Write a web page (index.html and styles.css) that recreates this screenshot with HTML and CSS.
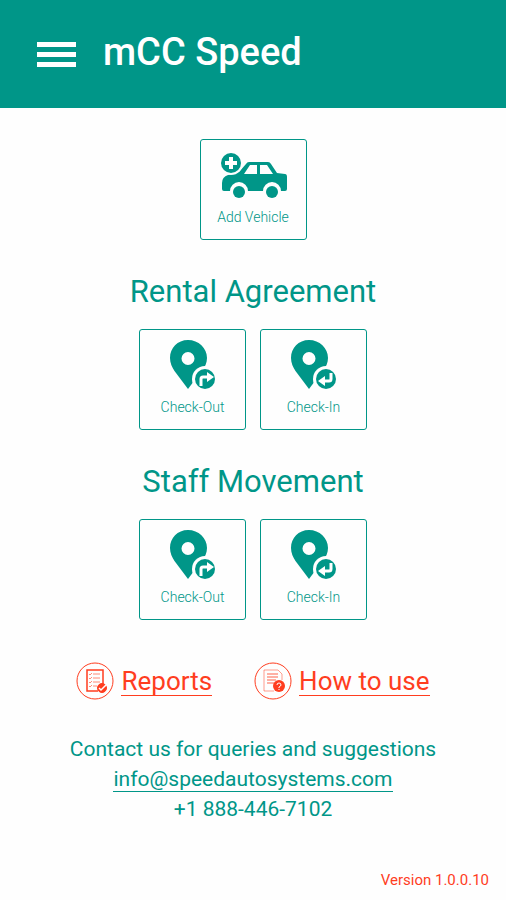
FILE: index.html
```
<!DOCTYPE html>
<html lang="en">
<head>
    <meta charset="UTF-8">
    <meta name="viewport" content="width=device-width, initial-scale=1.0">
    <title>mCC Speed</title>
    <link rel="stylesheet" href="styles.css">
</head>
<body>
    <!-- Shared icon shapes -->
    <svg class="sprite" aria-hidden="true">
        <symbol id="pin" viewBox="0 0 48 50">
            <path fill="currentColor" fill-rule="evenodd" d="M19 0C8.500 0 1 8 1 18c0 5 2 9 4.500 13L19 49l13.500-18C36 27 38 23 38 18 38 8 29.500 0 19 0zM19 12a6.500 6.500 0 1 1 0 13 6.500 6.500 0 0 1 0-13z"/>
            <circle cx="36" cy="39" r="13" fill="#fefefe"/>
            <circle cx="36" cy="39" r="10" fill="currentColor"/>
        </symbol>
    </svg>
    <header>
        <button class="menu-button" aria-label="Menu">
            <span></span>
            <span></span>
            <span></span>
        </button>
        <h1>mCC Speed</h1>
    </header>
    <main>
        <div class="tiles">
            <button class="tile">
                <svg width="68" height="50" viewBox="0 0 68 50" aria-hidden="true">
                    <path fill="currentColor" fill-rule="evenodd" d="M30 12h19q2 0 3 2l6 9 8 1q2 0 2 3v12q0 2-2 2h-4a9 9 0 0 0-18 0H29a9 9 0 0 0-18 0H5q-2 0-2-2v-6q0-6 6-8l11-3 7-8q1-2 3-2zM31 15l-6 9h13v-9zM41 15v9h13l-6-9z"/>
                    <circle cx="20" cy="42" r="6" fill="currentColor"/>
                    <circle cx="53" cy="42" r="6" fill="currentColor"/>
                    <circle cx="12" cy="13" r="12" fill="#fefefe"/>
                    <circle cx="12" cy="13" r="10" fill="currentColor"/>
                    <path fill="#fff" d="M10 7h4v4h4v4h-4v4h-4v-4H6v-4h4z"/>
                </svg>
                Add Vehicle
            </button>
        </div>

        <h2>Rental Agreement</h2>
        <div class="tiles">
            <button class="tile">
                <svg width="48" height="50" viewBox="0 0 48 50" aria-hidden="true">
                    <use href="#pin"/>
                    <path class="arrow" d="M32 46v-7q0-2 2-2h5"/>
                    <path fill="#fff" d="M38 32l7 5-7 5z"/>
                </svg>
                Check-Out
            </button>
            <button class="tile">
                <svg width="48" height="50" viewBox="0 0 48 50" aria-hidden="true">
                    <use href="#pin"/>
                    <path class="arrow" d="M41 33v6q0 2-2 2h-5"/>
                    <path fill="#fff" d="M35 36l-7 5 7 5z"/>
                </svg>
                Check-In
            </button>
        </div>

        <h2>Staff Movement</h2>
        <div class="tiles">
            <button class="tile">
                <svg width="48" height="50" viewBox="0 0 48 50" aria-hidden="true">
                    <use href="#pin"/>
                    <path class="arrow" d="M32 46v-7q0-2 2-2h5"/>
                    <path fill="#fff" d="M38 32l7 5-7 5z"/>
                </svg>
                Check-Out
            </button>
            <button class="tile">
                <svg width="48" height="50" viewBox="0 0 48 50" aria-hidden="true">
                    <use href="#pin"/>
                    <path class="arrow" d="M41 33v6q0 2-2 2h-5"/>
                    <path fill="#fff" d="M35 36l-7 5 7 5z"/>
                </svg>
                Check-In
            </button>
        </div>

        <nav class="links">
            <a href="#reports">
                <svg width="38" height="38" viewBox="0 0 38 38" fill="none" stroke="currentColor" aria-hidden="true">
                    <circle cx="19" cy="19" r="18"/>
                    <path stroke-width="1.500" d="M22 29H11V8h16v14"/>
                    <path stroke-width="1" opacity=".6" d="M13 12l1 1 2-2M17 12h7M13 16l1 1 2-2M17 16h7M13 20l1 1 2-2M17 20h7M13 24l1 1 2-2M17 24h4"/>
                    <circle cx="26" cy="26" r="4.500" fill="currentColor"/>
                    <path stroke="#fff" stroke-width="1.500" d="M23 26l2 2 5-5"/>
                </svg>
                <span>Reports</span>
            </a>
            <a href="#how-to-use">
                <svg width="38" height="38" viewBox="0 0 38 38" fill="none" stroke="currentColor" aria-hidden="true">
                    <circle cx="19" cy="19" r="18"/>
                    <path opacity=".5" d="M20 29H10V8h14l4 4v6"/>
                    <path opacity=".4" stroke-width="2" d="M13 12h11M13 15h11M13 18h9M13 21h7"/>
                    <circle cx="25" cy="24" r="6" fill="currentColor" stroke="none"/>
                    <path stroke="#fff" d="M23 23q0-2 2-2t2 2q0 1-2 2v1M25 27v1"/>
                </svg>
                <span>How to use</span>
            </a>
        </nav>

        <address>
            <p>Contact us for queries and suggestions</p>
            <p><a href="mailto:info@speedautosystems.com">info@speedautosystems.com</a></p>
            <p>+1 888-446-7102</p>
        </address>
    </main>
    <footer>Version 1.0.0.10</footer>
</body>
</html>
```

FILE: styles.css
```
* {
    box-sizing: border-box;
}
body {
    display: flex;
    flex-direction: column;
    min-height: 100vh;
    margin: 0;
    font-family: Roboto, sans-serif;
    color: #009688;
    background-color: #fefefe;
}
.sprite {
    position: absolute;
    width: 0;
    height: 0;
}
header {
    display: flex;
    align-items: center;
    gap: 27px;
    padding: 28px 37px 32px;
    color: white;
    background-color: #009688;
}
h1 {
    margin: 0;
    font-size: 38px;
    font-weight: 500;
    line-height: 48px;
}
.menu-button {
    display: flex;
    flex-direction: column;
    gap: 5px;
    padding: 4px 0 0;
    border: none;
    background: none;
    cursor: pointer;
}
.menu-button span {
    width: 39px;
    height: 5px;
    background-color: white;
}
main {
    flex: 1;
    padding: 31px 16px 0;
    text-align: center;
}
.tiles {
    display: flex;
    justify-content: center;
    gap: 14px;
}
.tile {
    display: flex;
    flex-direction: column;
    align-items: center;
    gap: 8px;
    width: 107px;
    height: 101px;
    padding: 10px 0 0;
    border: 1px solid #009688;
    border-radius: 3px;
    background: none;
    font-family: inherit;
    font-size: 14px;
    font-weight: 300;
    line-height: 18px;
    color: inherit;
    cursor: pointer;
}
.tile:hover {
    background-color: #e0f2f1;
}
.arrow {
    fill: none;
    stroke: white;
    stroke-width: 3;
}
h2 {
    margin: 31px 0 17px;
    font-size: 31px;
    font-weight: 400;
    line-height: 41px;
}
.links {
    display: flex;
    justify-content: center;
    gap: 42px;
    margin-top: 42px;
}
.links a {
    display: flex;
    align-items: center;
    gap: 7px;
    font-size: 26px;
    line-height: 28px;
    color: #ff3d1f;
    text-decoration: none;
}
.links span {
    border-bottom: 1px solid;
}
address {
    margin-top: 34px;
    font-size: 21px;
    font-style: normal;
    line-height: 30px;
}
address p {
    margin: 0;
}
address a {
    display: inline-block;
    border-bottom: 1px solid;
    line-height: 24px;
    color: inherit;
    text-decoration: none;
}
footer {
    padding: 10px 17px;
    font-size: 15px;
    font-weight: 400;
    line-height: 20px;
    text-align: right;
    color: #ff3d1f;
}
```
